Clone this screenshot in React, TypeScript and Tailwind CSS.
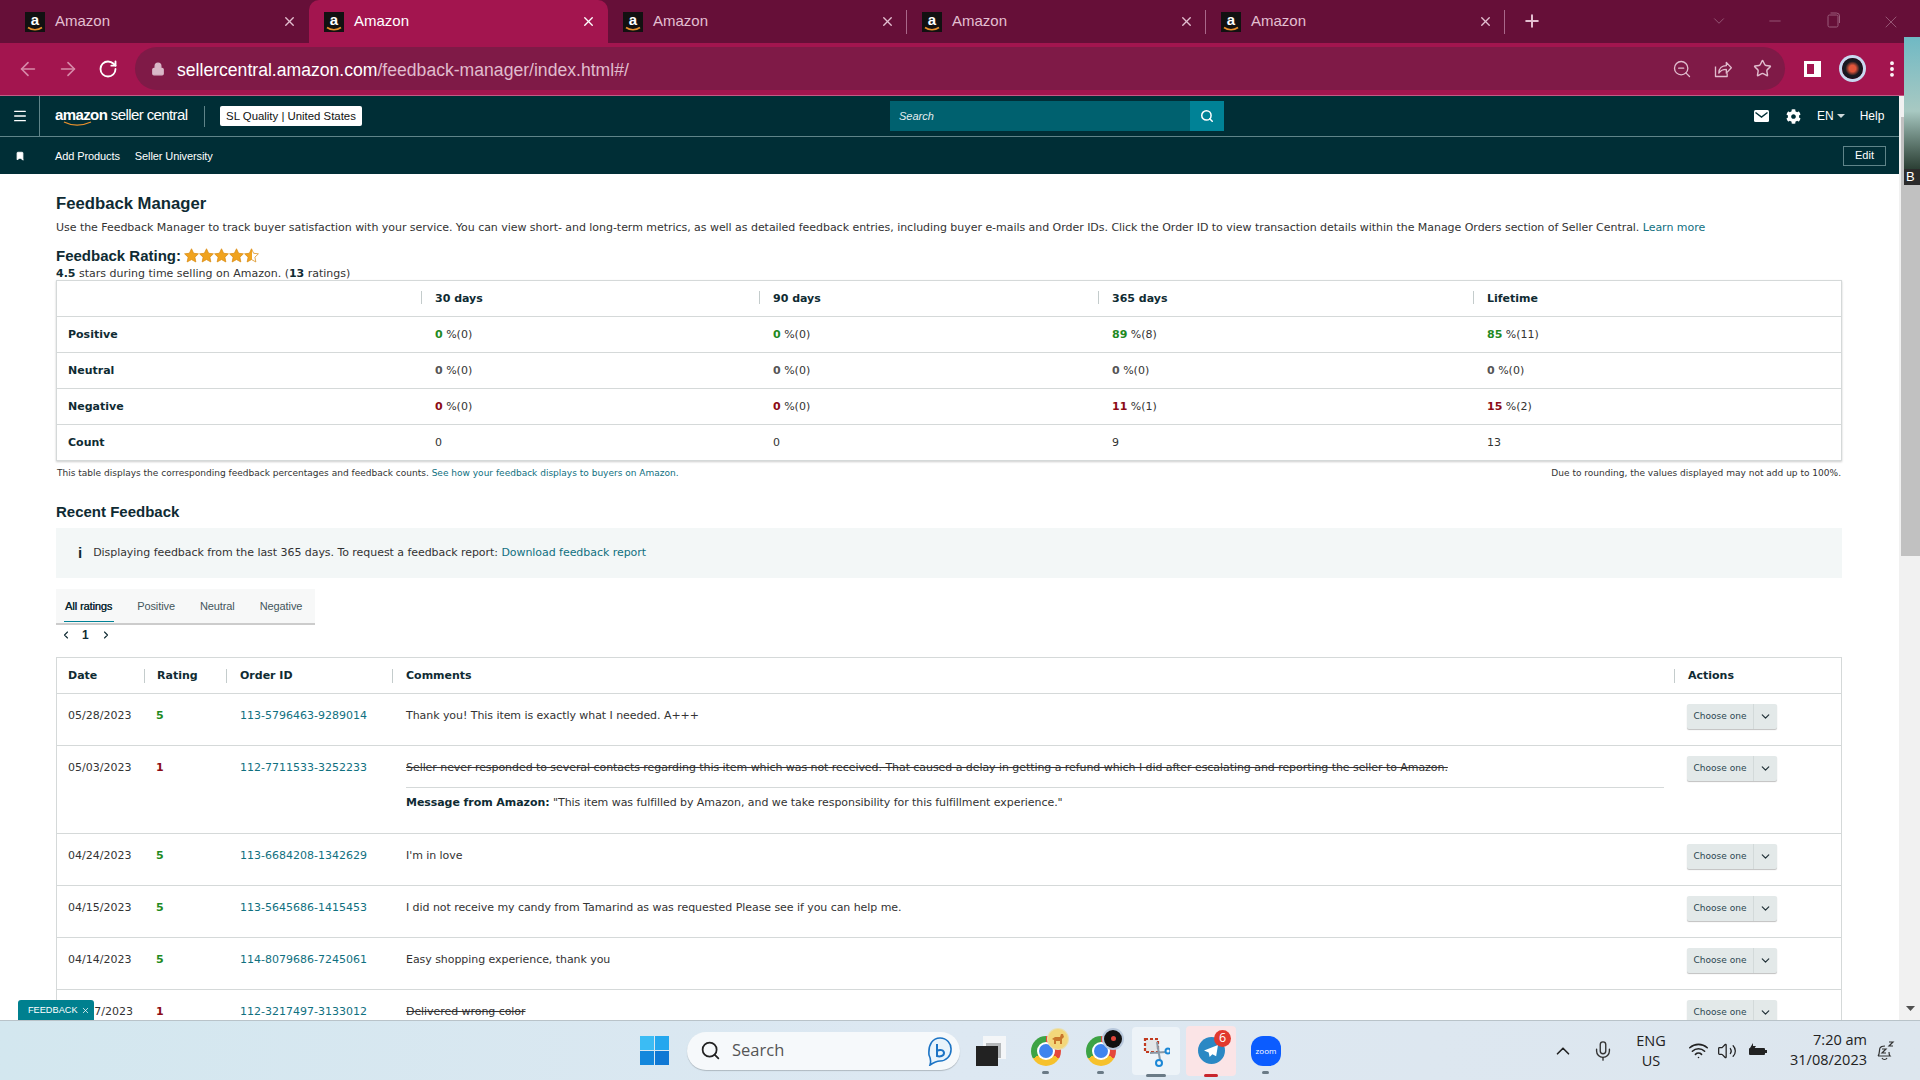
import React from "react";
import { ArrowLeft, ArrowRight, RotateCw, Lock, ZoomOut, Star, MoreVertical, Menu, Search, Bookmark, ChevronLeft, ChevronRight, ChevronDown, ChevronUp, X, Plus, Minus, Mic, Wifi, Volume2 } from "lucide-react";
import { FaCog } from "react-icons/fa";

const ui = "font-['Liberation_Sans',Arial,sans-serif]";
const body = "font-['DejaVu_Sans','Liberation_Sans',sans-serif]";
const winUi = "font-['Open_Sans','Liberation_Sans',sans-serif]";

function Favicon() {
  return (
    <svg width="20" height="20" viewBox="0 0 20 20" className="shrink-0">
      <rect width="20" height="20" fill="#111" />
      <text x="10" y="13" textAnchor="middle" fontSize="15" fontWeight="700" fill="#fff" fontFamily="Liberation Sans">a</text>
      <path d="M3 15.5c4 3 10 3 14 0" stroke="#e8912d" strokeWidth="1.6" fill="none" />
    </svg>
  );
}

function Tab({ active, sep }: { active?: boolean; sep?: boolean }) {
  return (
    <div className={`relative flex h-[43px] w-[299px] shrink-0 items-center rounded-t-[10px] pl-[15px] pr-[12px] ${active ? "bg-[#a3154f] text-white" : "text-[#e3bfd0]"}`}>
      <Favicon />
      <span className={`${ui} ml-[10px] text-[15px]`}>Amazon</span>
      <X size={15} strokeWidth={2.2} className={`ml-auto ${active ? "text-white" : "text-[#e3bfd0]"}`} />
      {sep && <div className="absolute right-0 top-[10px] h-[24px] w-px bg-[#a9688a]" />}
    </div>
  );
}

function Tabs() {
  return (
    <div className="flex h-[43px] items-start bg-[#660f38] pl-[10px]">
      <Tab />
      <Tab active />
      <Tab sep />
      <Tab sep />
      <Tab sep />
      <Plus size={20} strokeWidth={2.4} className="ml-[17px] mt-[11px] text-[#e3bfd0]" />
      <div className="ml-auto flex items-start pt-[12px] text-[#9a5c7a]">
        <ChevronDown size={18} strokeWidth={1.2} />
        <Minus size={18} strokeWidth={1.2} className="ml-[38px]" />
        <svg width="14" height="16" viewBox="0 0 14 16" className="ml-[43px]" fill="none" stroke="currentColor"><rect x="1" y="3" width="10" height="12" rx="1.5"/><path d="M3.5 1h6a3 3 0 0 1 3 3v7"/></svg>
        <X size={20} strokeWidth={1.1} className="ml-[40px] mr-[19px]" />
      </div>
    </div>
  );
}

function AddressBar() {
  return (
    <div className="flex h-[53px] items-center border-b border-[#c45a85] bg-[#a3154f] pb-[1px]">
      <ArrowLeft size={22} strokeWidth={1.8} className="ml-[17px] text-[#d78aa9]" />
      <ArrowRight size={22} strokeWidth={1.8} className="ml-[18px] text-[#d78aa9]" />
      <RotateCw size={20} strokeWidth={2.2} className="ml-[19px] text-white" />
      <div className="ml-[17px] flex h-[43px] w-[1650px] items-center rounded-full bg-[#7f1a47]">
        <Lock size={14} fill="#d9b8c8" strokeWidth={2} className="ml-[16px] text-[#d9b8c8]" />
        <span className={`${ui} ml-[12px] translate-y-[2px] text-[17.6px] text-white`}>sellercentral.amazon.com<span className="text-[#e0bccd]">/feedback-manager/index.html#/</span></span>
        <ZoomOut size={20} strokeWidth={1.6} className="ml-auto text-[#e0bccd]" />
        <svg width="20" height="20" viewBox="0 0 24 24" fill="none" stroke="#e0bccd" strokeWidth="1.6" strokeLinejoin="round" className="ml-[21px]"><path d="M3 9v12h14v-4" /><path d="M7 17c0-6 4-9 9-9V4l6 6.5-6 6.5v-4.500c-4 0-7 1.500-9 4.500z" /></svg>
        <Star size={19} strokeWidth={1.8} className="ml-[20px] mr-[13px] text-[#e0bccd]" />
      </div>
      <div className="ml-[19px] h-[16px] w-[17px] border-[3px] border-white border-r-[7px] bg-[#a3154f]" />
      <div className="ml-[21px] flex h-[21px] w-[21px] items-center justify-center rounded-full bg-[radial-gradient(circle,#e0553a_0%,#e0553a_22%,#1a1a22_48%,#0d0d12_100%)] ring-[3px] ring-[#c8d9f0]" />
      <MoreVertical size={20} strokeWidth={2.6} className="ml-[19px] text-white" />
    </div>
  );
}

function SellerNav() {
  return (
    <div className={`${ui} shrink-0 bg-[#002e36] text-white`}>
      <div className="flex h-[41px] items-center border-b border-[#5f8489]">
        <div className="flex h-full w-[40px] items-center justify-center border-r border-[#5f8489]">
          <Menu size={16} strokeWidth={2} />
        </div>
        <div className="ml-[15px] flex w-[134px] flex-col">
          <span className="text-[15px] leading-[16px] tracking-[-0.6px]"><b>amazon</b> seller central</span>
          <svg width="30" height="5" viewBox="0 0 30 5" className="-mt-[2px] ml-[8px]"><path d="M1 1c8 4 18 4 27 0" stroke="#e8912d" strokeWidth="1.3" fill="none" /></svg>
        </div>
        <div className="ml-[15px] h-[21px] w-px bg-[#5f8489]" />
        <div className="ml-[15px] flex h-[20px] w-[142px] items-center justify-center rounded-[2px] bg-white pt-px text-[11.4px] text-[#0f1111]">SL Quality | United States</div>
        <div className="ml-[528px] flex h-[30px] w-[334px] items-center bg-[#00616f]">
          <span className="ml-[9px] text-[11px] italic text-[#e6eeef]">Search</span>
          <div className="ml-auto flex h-full w-[34px] items-center justify-center bg-[#008296]"><Search size={14} strokeWidth={2.6} /></div>
        </div>
        <svg width="15" height="12" viewBox="0 0 15 12" className="ml-[530px]"><rect width="15" height="12" rx="1.5" fill="#fff" /><path d="M1.500 2.500L7.500 7l6-4.500" fill="none" stroke="#002e36" strokeWidth="1.4" /></svg>
        <FaCog size={15} className="ml-[17px] text-white" />
        <span className="ml-[16px] text-[12px]">EN</span>
        <svg width="8" height="4" viewBox="0 0 8 4" className="ml-[3px]"><path d="M0 0h8L4 4z" fill="#cfd8da" /></svg>
        <span className="ml-[15px] text-[12px]">Help</span>
      </div>
      <div className="flex h-[37px] items-center pr-[13px]">
        <Bookmark size={10} fill="#fff" className="ml-[15px]" />
        <span className="ml-[30px] translate-y-px text-[11px] tracking-[-0.1px]">Add Products</span>
        <span className="ml-[15px] translate-y-px text-[11px] tracking-[-0.1px]">Seller University</span>
        <div className="ml-auto flex h-[20px] w-[43px] items-center justify-center border border-[#5f8489] text-[11px]">Edit</div>
      </div>
    </div>
  );
}

function RatingStar({ half }: { half?: boolean }) {
  return (
    <svg width="15" height="15" viewBox="0 0 20 20">
      <defs>
        <linearGradient id="halfStar"><stop offset="50%" stopColor="#f0a31e" /><stop offset="50%" stopColor="#fff" /></linearGradient>
      </defs>
      <path d="M10 1l2.800 6 6.400.8-4.700 4.400 1.300 6.400L10 15.400l-5.800 3.200 1.300-6.400L.8 7.800 7.200 7z" fill={half ? "url(#halfStar)" : "#f0a31e"} stroke="#d98b12" strokeWidth="1" />
    </svg>
  );
}

const metricCols = ["w-[364px]", "w-[338px]", "w-[339px]", "w-[375px]", "flex-1"];

function MetricHeader({ label, i }: { label: string; i: number }) {
  return (
    <div className={`${metricCols[i + 1]} relative flex h-full items-center pl-[14px] pt-px font-bold`}>
      <div className="absolute left-0 top-[10px] h-[13px] w-px bg-[#c4cccc]" />
      {label}
    </div>
  );
}

function MetricRow({ label, cells }: { label: string; cells: ([string, string, string] | string)[] }) {
  return (
    <div className="flex h-[36px] items-center border-t border-[#d5d9d9] pt-px">
      <div className={`${metricCols[0]} pl-[11px] font-bold`}>{label}</div>
      {cells.map((c, i) => (
        <div key={i} className={`${metricCols[i + 1]} pl-[14px]`}>
          {typeof c === "string" ? <span className="text-[#333]">{c}</span> : <><b className={c[2]}>{c[0]}</b><span className="text-[#333]"> %({c[1]})</span></>}
        </div>
      ))}
    </div>
  );
}

const G = "text-[#1f8a1f]";
const N = "text-[#555]";
const R = "text-[#8c0c16]";

function MetricsTable() {
  return (
    <div className="h-[181px] w-[1786px] border border-[#d5d9d9] text-[11px] leading-[14px] text-[#0f2b33] shadow-[0_1px_2px_rgba(0,0,0,0.2)]">
      <div className="flex h-[35px] items-center">
        <div className={metricCols[0]} />
        <MetricHeader label="30 days" i={0} />
        <MetricHeader label="90 days" i={1} />
        <MetricHeader label="365 days" i={2} />
        <MetricHeader label="Lifetime" i={3} />
      </div>
      <MetricRow label="Positive" cells={[["0", "0", G], ["0", "0", G], ["89", "8", G], ["85", "11", G]]} />
      <MetricRow label="Neutral" cells={[["0", "0", N], ["0", "0", N], ["0", "0", N], ["0", "0", N]]} />
      <MetricRow label="Negative" cells={[["0", "0", R], ["0", "0", R], ["11", "1", R], ["15", "2", R]]} />
      <MetricRow label="Count" cells={["0", "0", "9", "13"]} />
    </div>
  );
}

function ChooseOne() {
  return (
    <div className="ml-[1px] flex h-[25px] w-[90px] items-center rounded-[2px] bg-[#e3e9e9] text-[#2b4650] shadow-[0_1px_1px_rgba(0,0,0,0.25)]">
      <span className="flex h-full w-[67px] items-center justify-center border-r border-[#d3dada] pb-[2px] text-[9px]">Choose one</span>
      <ChevronDown size={13} strokeWidth={2.2} className="ml-[5px] text-[#1f2f36]" />
    </div>
  );
}

const colClass = {
  date: "w-[87px]",
  rating: "w-[82px]",
  order: "w-[166px]",
  comments: "w-[1282px]",
};

function Sep() {
  return <div className="absolute left-0 top-[10px] h-[14px] w-px bg-[#c4cccc]" />;
}

function FeedbackHeader() {
  return (
    <div className="flex h-[35px] items-center pt-px font-bold">
      <div className={`${colClass.date} pl-[11px]`}>Date</div>
      <div className={`${colClass.rating} relative flex h-full items-center pl-[13px]`}><Sep />Rating</div>
      <div className={`${colClass.order} relative flex h-full items-center pl-[14px]`}><Sep />Order ID</div>
      <div className={`${colClass.comments} relative flex h-full items-center pl-[14px]`}><Sep />Comments</div>
      <div className="relative flex h-full flex-1 items-center pl-[14px]"><Sep />Actions</div>
    </div>
  );
}

function FeedbackRow({ date, rating, order, comment, strike, message, h = "h-[52px]", dateClass = "pl-[11px]" }: { date: string; rating: string; order: string; comment: string; strike?: boolean; message?: boolean; h?: string; dateClass?: string }) {
  return (
    <div className={`flex ${h} shrink-0 border-t border-[#d5d9d9] pt-[15px] text-[#333]`}>
      <div className={`${colClass.date} ${dateClass}`}>{date}</div>
      <div className={`${colClass.rating} pl-[12px] font-bold ${rating === "5" ? G : R}`}>{rating}</div>
      <div className={`${colClass.order} pl-[14px] text-[#10707f]`}>{order}</div>
      <div className={`${colClass.comments} pl-[14px] pr-[10px] tracking-[-0.06px]`}>
        <div className={strike ? "line-through" : ""}>{comment}</div>
        {message && (
          <div className="mt-[12px] border-t border-[#d5d9d9] pt-[8px]">
            <b className="text-[#0f2b33]">Message from Amazon:</b> "This item was fulfilled by Amazon, and we take responsibility for this fulfillment experience."
          </div>
        )}
      </div>
      <div className="-mt-[5px] pl-[12px]"><ChooseOne /></div>
    </div>
  );
}

function Content() {
  return (
    <div className={`${body} min-h-0 flex-1 overflow-hidden bg-white pl-[56px] text-[#0f2b33]`}>
      <h1 className={`${ui} mt-[21px] text-[16.7px] font-bold leading-[18px]`}>Feedback Manager</h1>
      <p className="mt-[8px] text-[11px] leading-[14px] tracking-[-0.04px] text-[#333]">Use the Feedback Manager to track buyer satisfaction with your service. You can view short- and long-term metrics, as well as detailed feedback entries, including buyer e-mails and Order IDs. Click the Order ID to view transaction details within the Manage Orders section of Seller Central. <span className="text-[#10707f]">Learn more</span></p>
      <div className="mt-[12px] flex h-[18px] items-center">
        <span className={`${ui} text-[15px] font-bold`}>Feedback Rating:</span>
        <span className="ml-[3px] flex -translate-y-[1px]"><RatingStar /><RatingStar /><RatingStar /><RatingStar /><RatingStar half /></span>
      </div>
      <div className="mt-[2px] mb-[-1px] text-[11px] leading-[14px] text-[#333]"><b className="text-[#0f2b33]">4.5</b> stars during time selling on Amazon. (<b className="text-[#0f2b33]">13</b> ratings)</div>
      <MetricsTable />
      <div className="mt-[6px] flex w-[1786px] justify-between px-[1px] text-[9.02px] leading-[12px] text-[#333]">
        <span>This table displays the corresponding feedback percentages and feedback counts. <span className="text-[#10707f]">See how your feedback displays to buyers on Amazon.</span></span>
        <span>Due to rounding, the values displayed may not add up to 100%.</span>
      </div>
      <h2 className={`${ui} mt-[24px] text-[15px] font-bold leading-[18px]`}>Recent Feedback</h2>
      <div className="mt-[7px] flex h-[50px] w-[1786px] items-center bg-[#f3f7f7] pl-[22px] text-[11px] tracking-[-0.05px] text-[#333]">
        <span className={`${ui} mr-[11px] text-[15px] font-bold text-[#0f2b33]`}>i</span>
        Displaying feedback from the last 365 days. To request a feedback report:&nbsp;<span className="text-[#10707f]">Download feedback report</span>
      </div>
      <div className={`${ui} mt-[11px] flex h-[36px] w-[259px] items-center gap-[25px] border-b-2 border-[#ccc] bg-[#f7f8f8] pl-[9px] text-[11px] tracking-[-0.1px] text-[#44565c]`}>
        <span className="relative font-normal text-[#0f2b33] [text-shadow:0.3px_0_0_#0f2b33]">All ratings<span className="absolute -bottom-[8px] -left-px -right-[2px] h-px bg-[#008296]" /></span>
        <span>Positive</span>
        <span>Neutral</span>
        <span>Negative</span>
      </div>
      <div className="mt-[2px] flex h-[16px] items-center pl-[4px]">
        <ChevronLeft size={12} strokeWidth={2.2} />
        <b className={`${ui} ml-[10px] text-[12px]`}>1</b>
        <ChevronRight size={12} strokeWidth={2.2} className="ml-[11px]" />
      </div>
      <div className="mt-[14px] w-[1786px] border-x border-t border-[#d5d9d9] text-[11px] leading-[14px]">
        <FeedbackHeader />
        <FeedbackRow date="05/28/2023" rating="5" order="113-5796463-9289014" comment="Thank you! This item is exactly what I needed. A+++" />
        <FeedbackRow h="h-[88px]" date="05/03/2023" rating="1" order="112-7711533-3252233" strike message comment="Seller never responded to several contacts regarding this item which was not received. That caused a delay in getting a refund which I did after escalating and reporting the seller to Amazon." />
        <FeedbackRow date="04/24/2023" rating="5" order="113-6684208-1342629" comment="I'm in love" />
        <FeedbackRow date="04/15/2023" rating="5" order="113-5645686-1415453" comment="I did not receive my candy from Tamarind as was requested Please see if you can help me." />
        <FeedbackRow date="04/14/2023" rating="5" order="114-8079686-7245061" comment="Easy shopping experience, thank you" />
        <FeedbackRow date="7/2023" dateClass="pr-[11px] text-right" rating="1" order="112-3217497-3133012" strike comment="Delivered wrong color" />
      </div>
    </div>
  );
}

function Scrollbar() {
  return (
    <div className="flex w-[21px] shrink-0 flex-col bg-[#f1f1f1] pt-[21px]">
      <div className="ml-[2px] h-[439px] w-[19px] bg-[#c1c1c1]" />
      <div className="mt-auto flex h-[24px] items-center justify-center pl-[1px]">
        <svg width="9" height="5" viewBox="0 0 9 5"><path d="M0 0h9L4.500 5z" fill="#505050" /></svg>
      </div>
    </div>
  );
}

function Taskbar() {
  return (
    <div className={`${winUi} relative flex h-[60px] shrink-0 items-center border-t border-[#b9c3c9] bg-gradient-to-r from-[#d3e7ef] via-[#dde8f2] to-[#dde6ee]`}>
      <div className="ml-[640px] grid h-[29px] w-[29px] grid-cols-2 gap-[1.5px]">
        <div className="bg-[#3bbcf4]" /><div className="bg-[#24a7ee]" /><div className="bg-[#1487dc]" /><div className="bg-[#0f78d4]" />
      </div>
      <div className="ml-[18px] flex h-[38px] w-[273px] items-center rounded-full bg-[#f6f9fb] shadow-[0_1px_1px_rgba(0,0,0,0.2)]">
        <Search size={21} strokeWidth={2} className="ml-[13px] text-[#222]" />
        <span className="ml-[11px] text-[16.5px] text-[#555]">Search</span>
        <svg width="26" height="30" viewBox="0 0 26 30" className="ml-auto mr-[7px]"><path d="M13 2a11 11 0 0 1 11 12c0 6-5 11-11 11-4 0-7 2-10 4 1-3 1-6-1-10C1 8 6 2 13 2z" fill="#e8f4fb" stroke="#1b73c4" strokeWidth="1.6" /><path d="M10 8v12c3 1 7 0 7-3s-4-4-7-2" fill="none" stroke="#1b73c4" strokeWidth="2" /></svg>
      </div>
      <div className="relative ml-[16px] h-[30px] w-[30px]">
        <div className="absolute right-0 top-0 h-[23px] w-[23px] bg-[#f4f6f8]" />
        <div className="absolute right-[5px] top-[7px] h-[15px] w-[15px] bg-[#b5b8ba]" />
        <div className="absolute bottom-0 left-0 h-[20px] w-[22px] bg-[#222]" />
      </div>
      <div className="relative ml-[25px] h-[30px] w-[30px]">
        <Chrome />
        <div className="absolute -right-[7px] -top-[7px] flex h-[20px] w-[20px] items-center justify-center rounded-full bg-[#f3d77a] ring-1 ring-[#e9e0b0]">
          <svg width="14" height="12" viewBox="0 0 14 12"><path d="M1 6l3-2 5 0 1-3 2 0 1 3-2 2v5H9V8H5v3H3V7z" fill="#c9762c" /></svg>
        </div>
        <Dot x="left-[11px]" />
      </div>
      <div className="relative ml-[25px] h-[30px] w-[30px]">
        <Chrome />
        <div className="absolute -right-[6px] -top-[6px] flex h-[18px] w-[18px] items-center justify-center rounded-full bg-[#111] ring-2 ring-[#b8c8dc]"><div className="h-[5px] w-[5px] rounded-full bg-[#e0453a]" /></div>
        <Dot x="left-[11px]" />
      </div>
      <div className="relative ml-[16px] flex h-[48px] w-[48px] items-center justify-center rounded-[4px] bg-[#edf3f8]">
        <svg width="28" height="34" viewBox="0 0 28 34" fill="none"><rect x="3" y="5" width="13" height="13" fill="#e3e6e8" stroke="#c23a1f" strokeWidth="2.2" strokeDasharray="3 2" /><path d="M15 8l3 18M8 19l16-1" stroke="#8a99a6" strokeWidth="2" /><circle cx="17" cy="29" r="3" stroke="#1b87d6" strokeWidth="2" /><circle cx="26" cy="17" r="2.500" stroke="#1b87d6" strokeWidth="2" /></svg>
        <div className="absolute -bottom-[2px] left-[14px] h-[3px] w-[20px] rounded-full bg-[#6a7a86]" />
      </div>
      <div className="relative ml-[6px] flex h-[50px] w-[50px] items-center justify-center rounded-[4px] bg-[#fbe4e6]">
        <div className="flex h-[27px] w-[27px] items-center justify-center rounded-full bg-[#2b88c4]">
          <svg width="16" height="14" viewBox="0 0 17 15"><path d="M16 1L1 7l5 2 1 5 3-3 4 2z" fill="#fff" /></svg>
        </div>
        <div className="absolute right-[5px] top-[4px] flex h-[17px] w-[17px] items-center justify-center rounded-full bg-[#e1392e] text-[12.5px] leading-none text-white">6</div>
        <div className="absolute -bottom-[1px] left-[18px] h-[3px] w-[14px] rounded-full bg-[#c9252c]" />
      </div>
      <div className="relative ml-[15px] flex h-[30px] w-[30px] items-center justify-center rounded-[12px] bg-[#0b5cff] text-[8px] text-white">zoom<Dot x="left-[11px]" /></div>
      <ChevronUp size={22} strokeWidth={1.8} className="ml-[271px] text-[#222]" />
      <Mic size={22} strokeWidth={1.5} className="ml-[18px] text-[#333]" />
      <div className="ml-[19px] flex w-[36px] flex-col items-center text-[14.5px] leading-[20px] text-[#222]"><span>ENG</span><span>US</span></div>
      <Wifi size={21} strokeWidth={1.8} className="ml-[19px] text-[#222]" />
      <Volume2 size={20} strokeWidth={1.5} className="ml-[8px] text-[#222]" />
      <svg width="20" height="15" viewBox="0 0 20 15" className="ml-[11px]"><path d="M2 5h14a1 1 0 0 1 1 1v1h2v3h-2v1a1 1 0 0 1-1 1H2a1 1 0 0 1-1-1V6a1 1 0 0 1 1-1z" fill="#222" /><path d="M5 0L2 5h3l-1 4 4-6H5z" fill="#222" /></svg>
      <div className="ml-[19px] flex w-[80px] -translate-y-px flex-col items-end whitespace-nowrap text-[14.5px] leading-[20px] text-[#222]"><span>7:20 am</span><span>31/08/2023</span></div>
      <svg width="20" height="22" viewBox="0 0 20 22" fill="none" stroke="#333" strokeWidth="1.200" className="ml-[8px]"><path d="M3 16c2-2 1-6 2-8s3-2 5-2M3 16h12c-1-1-1-3-1-4M7 18c1 2 4 2 5 0"/><path d="M14 2h4l-4 4h4" /><path d="M7 9h4l-4 4h4" /></svg>
    </div>
  );
}

function Dot({ x }: { x: string }) {
  return <div className={`absolute -bottom-[8px] ${x} h-[3px] w-[7px] rounded-full bg-[#6a7a86]`} />;
}

function Chrome() {
  return (
    <div className="relative h-[30px] w-[30px] rounded-full bg-[conic-gradient(#e5483b_0deg_120deg,#f6c12c_120deg_240deg,#3da345_240deg_360deg)]">
      <div className="absolute left-[8px] top-[8px] h-[14px] w-[14px] rounded-full bg-[#3f84ef] ring-2 ring-white" />
    </div>
  );
}

export default function App() {
  return (
    <div className="relative flex h-[1080px] w-[1920px] flex-col overflow-hidden">
      <Tabs />
      <AddressBar />
      <div className="relative flex min-h-0 flex-1">
        <div className="flex min-w-0 flex-1 flex-col">
          <SellerNav />
          <Content />
        </div>
        <Scrollbar />
        <div className={`${ui} absolute bottom-0 left-[18px] flex h-[20px] w-[76px] items-center whitespace-nowrap rounded-t-[3px] bg-[#00808f] pl-[10px] pt-px text-[9.2px] text-white`}>
          FEEDBACK
          <X size={9} className="ml-[3px]" />
        </div>
      </div>
      <Taskbar />
      <div className={`${ui} absolute right-0 top-[37px] flex h-[148px] w-[16px] items-end overflow-hidden bg-gradient-to-b from-[#6fb9c4] via-[#a8c9c2] to-[#0f1f14]`}>
        <div className="flex h-[16px] w-full items-center bg-[#2b2b2b] pl-[2px] text-[13px] text-white">B</div>
      </div>
    </div>
  );
}
